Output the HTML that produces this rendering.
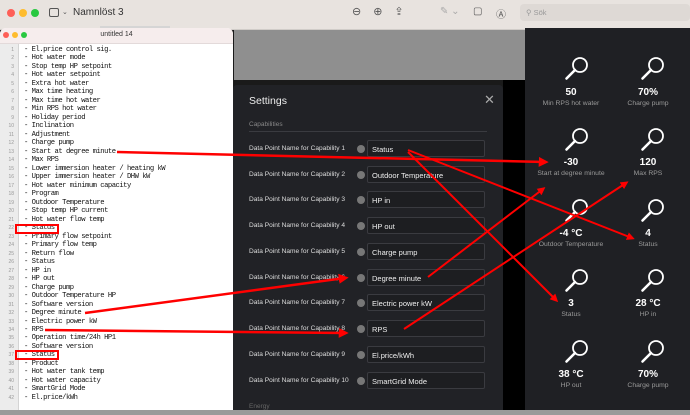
<!DOCTYPE html>
<html><head><meta charset="utf-8"><style>
*{margin:0;padding:0;box-sizing:border-box}
body{width:690px;height:415px;overflow:hidden;background:#1a1a1a;font-family:"Liberation Sans",sans-serif;position:relative}
.a{position:absolute}
.tb{left:0;top:0;width:690px;height:30px;background:#e8e3df;border-bottom:1px solid #d0ccc8}
.dot{width:8px;height:8px;border-radius:50%;top:9px}
.ed{left:0;top:28px;width:233px;height:382px;background:#fff;border-radius:6px 6px 0 0;overflow:hidden}
.edh{left:0;top:0;width:233px;height:16px;background:#f6eded;border-bottom:1px solid #e3dada}
.gut{left:0;top:16px;width:19px;height:366px;background:#ececec;border-right:1px solid #d4d4d4}
.ln{font-family:"Liberation Mono",monospace;font-size:7.2px;line-height:8.48px;white-space:pre;color:#111;letter-spacing:-0.5px}
.num{font-family:"Liberation Sans",sans-serif;font-size:5px;line-height:8.48px;color:#999;text-align:right;width:12px;white-space:pre}
.md{left:233px;top:85px;width:270px;height:330px;background:#212226;border-radius:4px}
.lab{left:16px;font-size:6.6px;color:#ddd}
.inf{left:124px;width:8px;height:8px;border-radius:50%;background:#777}
.inp{left:134px;width:118px;height:17px;border:1px solid #3a3b40;border-radius:2px;background:#1d1e21;color:#eee;font-size:7.5px;padding:4px 0 0 4px}
.rp{left:525px;top:28px;width:165px;height:382px;background:#1f2024}
.t{width:76px;text-align:center}
.v{font-size:10px;font-weight:bold;color:#fff}
.l{font-size:6.8px;color:#999;margin-top:2px}
</style></head><body>
<div class="a tb">
 <div class="a dot" style="left:7px;background:#fe5f57"></div>
 <div class="a dot" style="left:19px;background:#febc2e"></div>
 <div class="a dot" style="left:31px;background:#28c840"></div>
 <div class="a" style="left:49px;top:8px;width:10px;height:9px;border:1px solid #555;border-radius:2px"></div>
 <div class="a" style="left:62px;top:8px;font-size:7px;color:#555">⌄</div>
 <div class="a" style="left:73px;top:7px;font-size:10px;color:#333">Namnlöst 3</div>
 <div class="a" style="left:352px;top:5px;font-size:11px;color:#555;letter-spacing:12px">⊖⊕⇪</div>
 <div class="a" style="left:440px;top:6px;font-size:10px;color:#aaa">✎ ⌄</div>
 <div class="a" style="left:473px;top:6px;font-size:10px;color:#555">▢</div>
 <div class="a" style="left:496px;top:6px;font-size:10px;color:#555">Ⓐ</div>
 <div class="a" style="left:520px;top:4px;width:170px;height:17px;background:#ded9d5;border-radius:4px;font-size:7.5px;color:#999;padding:4px 6px">⚲ Sök</div>
</div>
<div class="a" style="left:234px;top:30px;width:291px;height:50px;background:#8f8f8f"></div>
<div class="a" style="left:100px;top:26px;width:70px;height:6px;background:#d5d5d5"></div>
<div class="a ed">
 <div class="a edh">
  <div class="a dot" style="left:3px;top:4px;width:6px;height:6px;background:#fe5f57"></div>
  <div class="a dot" style="left:12px;top:4px;width:6px;height:6px;background:#febc2e"></div>
  <div class="a dot" style="left:21px;top:4px;width:6px;height:6px;background:#28c840"></div>
  <div class="a" style="left:0;width:233px;top:3px;text-align:center;font-size:7px;color:#333">untitled 14</div>
 </div>
 <div class="a gut"></div>
 <div class="a num" style="left:2px;top:18px">1
2
3
4
5
6
7
8
9
10
11
12
13
14
15
16
17
18
19
20
21
22
23
24
25
26
27
28
29
30
31
32
33
34
35
36
37
38
39
40
41
42</div>
 <div class="a ln" style="left:24px;top:18px">- El.price control sig.
- Hot water mode
- Stop temp HP setpoint
- Hot water setpoint
- Extra hot water
- Max time heating
- Max time hot water
- Min RPS hot water
- Holiday period
- Inclination
- Adjustment
- Charge pump
- Start at degree minute
- Max RPS
- Lower immersion heater / heating kW
- Upper immersion heater / DHW kW
- Hot water minimum capacity
- Program
- Outdoor Temperature
- Stop temp HP current
- Hot water flow temp
- Status
- Primary flow setpoint
- Primary flow temp
- Return flow
- Status
- HP in
- HP out
- Charge pump
- Outdoor Temperature HP
- Software version
- Degree minute
- Electric power kW
- RPS
- Operation time/24h HP1
- Software version
- Status
- Product
- Hot water tank temp
- Hot water capacity
- SmartGrid Mode
- El.price/kWh</div>
 <div class="a" style="left:15px;top:196px;width:44px;height:10px;border:2px solid #f00"></div>
 <div class="a" style="left:15px;top:322px;width:44px;height:10px;border:2px solid #f00"></div>
</div>
<div class="a md">
 <div class="a" style="left:16px;top:10px;font-size:10.5px;color:#eee">Settings</div>
 <div class="a" style="left:251px;top:7px;font-size:13px;color:#aaa">✕</div>
 <div class="a" style="left:16px;top:36px;font-size:6.5px;color:#888">Capabilities</div>
 <div class="a" style="left:16px;top:46px;width:238px;height:1px;background:#3a3b40"></div>
 <div class="a lab" style="top:60px">Data Point Name for Capability 1</div><div class="a inf" style="top:60px"></div><div class="a inp" style="top:55px">Status</div>
 <div class="a lab" style="top:86px">Data Point Name for Capability 2</div><div class="a inf" style="top:86px"></div><div class="a inp" style="top:81px">Outdoor Temperature</div>
 <div class="a lab" style="top:111px">Data Point Name for Capability 3</div><div class="a inf" style="top:111px"></div><div class="a inp" style="top:106px">HP in</div>
 <div class="a lab" style="top:137px">Data Point Name for Capability 4</div><div class="a inf" style="top:137px"></div><div class="a inp" style="top:132px">HP out</div>
 <div class="a lab" style="top:163px">Data Point Name for Capability 5</div><div class="a inf" style="top:163px"></div><div class="a inp" style="top:158px">Charge pump</div>
 <div class="a lab" style="top:189px">Data Point Name for Capability 6</div><div class="a inf" style="top:189px"></div><div class="a inp" style="top:184px">Degree minute</div>
 <div class="a lab" style="top:214px">Data Point Name for Capability 7</div><div class="a inf" style="top:214px"></div><div class="a inp" style="top:209px">Electric power kW</div>
 <div class="a lab" style="top:240px">Data Point Name for Capability 8</div><div class="a inf" style="top:240px"></div><div class="a inp" style="top:235px">RPS</div>
 <div class="a lab" style="top:266px">Data Point Name for Capability 9</div><div class="a inf" style="top:266px"></div><div class="a inp" style="top:261px">El.price/kWh</div>
 <div class="a lab" style="top:292px">Data Point Name for Capability 10</div><div class="a inf" style="top:292px"></div><div class="a inp" style="top:287px">SmartGrid Mode</div>
 <div class="a" style="left:16px;top:318px;font-size:6.5px;color:#666">Energy</div>
</div>
<div class="a" style="left:503px;top:80px;width:22px;height:330px;background:#000"></div>
<div class="a rp"></div>
<svg class="a" style="left:0;top:0" width="690" height="415">
 <defs><g id="mg"><circle cx="7" cy="-7" r="7" fill="none" stroke="#fff" stroke-width="1.8"/><line x1="2" y1="-2" x2="-6.5" y2="6.5" stroke="#fff" stroke-width="2.6" stroke-linecap="round"/></g></defs>
 <use href="#mg" x="573" y="72"/><use href="#mg" x="649" y="72"/>
 <use href="#mg" x="573" y="143"/><use href="#mg" x="649" y="143"/>
 <use href="#mg" x="573" y="214"/><use href="#mg" x="649" y="214"/>
 <use href="#mg" x="573" y="284"/><use href="#mg" x="649" y="284"/>
 <use href="#mg" x="573" y="355"/><use href="#mg" x="649" y="355"/>
</svg>
<div class="a" style="left:0;top:0">
 <div class="a t" style="left:533px;top:87px"><div class="v">50</div><div class="l">Min RPS hot water</div></div>
 <div class="a t" style="left:610px;top:87px"><div class="v">70%</div><div class="l">Charge pump</div></div>
 <div class="a t" style="left:533px;top:157px"><div class="v">-30</div><div class="l">Start at degree minute</div></div>
 <div class="a t" style="left:610px;top:157px"><div class="v">120</div><div class="l">Max RPS</div></div>
 <div class="a t" style="left:533px;top:228px"><div class="v">-4 °C</div><div class="l">Outdoor Temperature</div></div>
 <div class="a t" style="left:610px;top:228px"><div class="v">4</div><div class="l">Status</div></div>
 <div class="a t" style="left:533px;top:298px"><div class="v">3</div><div class="l">Status</div></div>
 <div class="a t" style="left:610px;top:298px"><div class="v">28 °C</div><div class="l">HP in</div></div>
 <div class="a t" style="left:533px;top:369px"><div class="v">38 °C</div><div class="l">HP out</div></div>
 <div class="a t" style="left:610px;top:369px"><div class="v">70%</div><div class="l">Charge pump</div></div>
</div>
<div class="a" style="left:0;top:410px;width:690px;height:5px;background:#9a9a9a"></div>
<svg class="a" style="left:0;top:0" width="690" height="415">
 <defs><marker id="ah" markerWidth="4" markerHeight="4" refX="2.5" refY="2" orient="auto"><path d="M0,0 L4,2 L0,4 Z" fill="#f00"/></marker></defs>
 <g stroke="#f00" fill="none" marker-end="url(#ah)">
  <line x1="117" y1="152" x2="545" y2="162" stroke-width="2.5"/>
  <line x1="408" y1="150" x2="632" y2="238" stroke-width="2"/>
  <line x1="408" y1="152" x2="556" y2="300" stroke-width="2"/>
  <line x1="428" y1="277" x2="543" y2="189" stroke-width="2"/>
  <line x1="404" y1="329" x2="626" y2="183" stroke-width="2"/>
  <line x1="85" y1="313" x2="345" y2="278" stroke-width="2.5"/>
  <line x1="45" y1="330" x2="345" y2="333" stroke-width="2.5"/>
 </g>
</svg>
</body></html>
